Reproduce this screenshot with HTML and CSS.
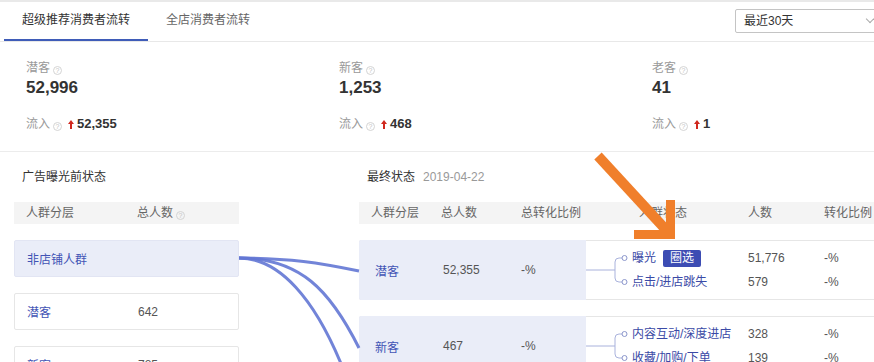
FILE: index.html
```html
<!DOCTYPE html>
<html lang="zh-CN">

<head>
    <meta charset="UTF-8">
    <meta name="viewport" content="width=device-width, initial-scale=1.0">
    <title>消费者流转</title>
    <link rel="stylesheet" href="styles.css">
</head>

<body>
    <div class="page">
        <div class="top-strip"></div>
        <!-- 顶部tab -->
        <div class="tabs">
            <a href="javascript:;" class="tab active">超级推荐消费者流转</a>
            <a href="javascript:;" class="tab">全店消费者流转</a>
            <div class="range">
                <span>最近30天</span>
                <i class="chev"></i>
            </div>
        </div>

        <!-- 汇总数据 -->
        <div class="stats">
            <div class="stat">
                <div class="stat-label">潜客<span class="q">?</span></div>
                <div class="stat-value">52,996</div>
                <div class="stat-flow">流入<span class="q">?</span><svg class="up" width="6" height="9" viewBox="0 0 6 9"><path d="M3 0 L6 4 H4 V9 H2 V4 H0 Z" /></svg><b>52,355</b></div>
            </div>
            <div class="stat">
                <div class="stat-label">新客<span class="q">?</span></div>
                <div class="stat-value">1,253</div>
                <div class="stat-flow">流入<span class="q">?</span><svg class="up" width="6" height="9" viewBox="0 0 6 9"><path d="M3 0 L6 4 H4 V9 H2 V4 H0 Z" /></svg><b>468</b></div>
            </div>
            <div class="stat">
                <div class="stat-label">老客<span class="q">?</span></div>
                <div class="stat-value">41</div>
                <div class="stat-flow">流入<span class="q">?</span><svg class="up" width="6" height="9" viewBox="0 0 6 9"><path d="M3 0 L6 4 H4 V9 H2 V4 H0 Z" /></svg><b>1</b></div>
            </div>
        </div>

        <!-- 流转图 -->
        <div class="flow">
            <div class="before">
                <div class="col-title">广告曝光前状态</div>
                <div class="thead-l">
                    <span class="c1">人群分层</span>
                    <span>总人数<span class="q">?</span></span>
                </div>
                <div class="box-l on">
                    <span class="c1 name">非店铺人群</span>
                    <span></span>
                </div>
                <div class="box-l">
                    <span class="c1 name">潜客</span>
                    <span>642</span>
                </div>
                <div class="box-l">
                    <span class="c1 name">新客</span>
                    <span>785</span>
                </div>
            </div>

            <div class="after">
                <div class="col-title">最终状态<span class="date">2019-04-22</span></div>
                <div class="thead-r">
                    <span>人群分层</span>
                    <span>总人数</span>
                    <span>总转化比例</span>
                    <span>人群状态</span>
                    <span>人数</span>
                    <span>转化比例</span>
                </div>

                <div class="box-r">
                    <div class="box-main">
                        <span class="name">潜客</span>
                        <span>52,355</span>
                        <span>-%</span>
                    </div>
                    <svg class="link" width="46" height="60">
                        <path d="M0 30 H29 M29 30 V22 Q29 18 33 18 H36 M29 30 V38 Q29 42 33 42 H36" />
                        <circle cx="38.5" cy="18" r="2.5" />
                        <circle cx="38.5" cy="42" r="2.5" />
                    </svg>
                    <div class="subs">
                        <div class="sub">
                            <span class="st">曝光<em class="tag">圈选</em></span>
                            <span>51,776</span>
                            <span>-%</span>
                        </div>
                        <div class="sub">
                            <span class="st">点击/进店跳失</span>
                            <span>579</span>
                            <span>-%</span>
                        </div>
                    </div>
                </div>

                <div class="box-r">
                    <div class="box-main">
                        <span class="name">新客</span>
                        <span>467</span>
                        <span>-%</span>
                    </div>
                    <svg class="link" width="46" height="60">
                        <path d="M0 30 H29 M29 30 V22 Q29 18 33 18 H36 M29 30 V38 Q29 42 33 42 H36" />
                        <circle cx="38.5" cy="18" r="2.5" />
                        <circle cx="38.5" cy="42" r="2.5" />
                    </svg>
                    <div class="subs">
                        <div class="sub">
                            <span class="st">内容互动/深度进店</span>
                            <span>328</span>
                            <span>-%</span>
                        </div>
                        <div class="sub">
                            <span class="st">收藏/加购/下单</span>
                            <span>139</span>
                            <span>-%</span>
                        </div>
                    </div>
                </div>
            </div>
        </div>

        <!-- 连线 + 标注箭头 -->
        <svg class="overlay" width="874" height="362" viewBox="0 0 874 362">
            <g class="curves">
                <path d="M239 258 C290 258 320 263 359 271" />
                <path d="M239 258 C300 258 330 290 359 348" />
                <path d="M239 258 C280 258 315 300 342 366" />
            </g>
            <g class="mark">
                <line x1="598" y1="156" x2="668" y2="232" />
                <polyline points="634,234.5 670.5,234.5 670.5,200" />
            </g>
        </svg>
    </div>
</body>

</html>
```

FILE: styles.css
```css
* {
    margin: 0;
    padding: 0;
    box-sizing: border-box;
}

body {
    width: 874px;
    height: 362px;
    overflow: hidden;
    background: #fff;
    font-family: "Liberation Sans", "Noto Sans CJK SC", sans-serif;
    font-size: 12px;
    color: #333;
}

a {
    text-decoration: none;
}

.page {
    position: relative;
    width: 874px;
    height: 362px;
    overflow: hidden;
}

.top-strip {
    height: 2px;
    background: #e9e9e9;
}

/* tabs */
.tabs {
    display: flex;
    height: 40px;
    padding-left: 4px;
    border-bottom: 1px solid #e8e8e8;
}

.tab {
    height: 39px;
    padding: 0 18px;
    line-height: 37px;
    color: #666;
    border-bottom: 2px solid transparent;
}

.tab.active {
    color: #333;
    border-bottom-color: #3f5cb8;
}

.range {
    position: relative;
    margin: 7px -16px 0 auto;
    width: 155px;
    height: 24px;
    padding-left: 8px;
    line-height: 22px;
    border: 1px solid #c4c4c4;
    border-radius: 2px;
    color: #333;
}

.chev {
    position: absolute;
    top: 6px;
    right: 16px;
    width: 6px;
    height: 6px;
    border-right: 1px solid #aaa;
    border-bottom: 1px solid #aaa;
    transform: rotate(45deg);
}

/* stats */
.stats {
    display: flex;
    padding: 18px 0 18px 26px;
    border-bottom: 1px solid #ececec;
}

.stat {
    flex: none;
    width: 313px;
}

.stat-label {
    height: 16px;
    line-height: 16px;
    color: #999;
}

.stat-value {
    height: 24px;
    line-height: 24px;
    font-size: 17px;
    font-weight: bold;
    color: #333;
}

.stat-flow {
    margin-top: 15px;
    height: 18px;
    line-height: 18px;
    color: #999;
}

.stat-flow b {
    font-size: 13px;
    color: #333;
}

.up {
    margin: 0 3px 0 6px;
    vertical-align: -1px;
    fill: #d0281e;
}

.q {
    display: inline-block;
    width: 9px;
    height: 9px;
    margin-left: 3px;
    border: 1px solid #d4d4d4;
    border-radius: 50%;
    font-size: 7px;
    line-height: 8px;
    text-align: center;
    color: #c4c4c4;
    vertical-align: -1px;
}

/* flow */
.flow {
    display: flex;
    gap: 120px;
    padding: 16px 0 0 14px;
}

.before {
    width: 225px;
    flex: none;
}

.after {
    flex: none;
    width: 540px;
}

.col-title {
    height: 18px;
    line-height: 18px;
    padding-left: 8px;
    color: #333;
    margin-bottom: 16px;
}

.date {
    margin-left: 8px;
    color: #999;
}

.thead-l,
.thead-r {
    display: flex;
    height: 22px;
    line-height: 22px;
    background: #f4f4f4;
    color: #666;
    margin-bottom: 16px;
}

.thead-l {
    padding-left: 12px;
}

.thead-l .c1 {
    width: 111px;
}

.box-l {
    position: relative;
    z-index: 1;
    display: flex;
    align-items: center;
    height: 37px;
    padding-left: 12px;
    margin-bottom: 16px;
    background: #fff;
    border: 1px solid #e6e6e6;
    border-radius: 2px;
    color: #555;
}

.box-l.on {
    background: #eaedf8;
    border-color: #e2e5f3;
}

.box-l .c1 {
    width: 111px;
}

.name {
    color: #4254b5;
}

.thead-r {
    padding-left: 12px;
}

.thead-r span:nth-child(1) {
    width: 70px;
}

.thead-r span:nth-child(2) {
    width: 80px;
}

.thead-r span:nth-child(3) {
    width: 118px;
}

.thead-r span:nth-child(4) {
    width: 109px;
}

.thead-r span:nth-child(5) {
    width: 76px;
}

.box-r {
    position: relative;
    z-index: 1;
    display: flex;
    height: 60px;
    margin-bottom: 16px;
    background: #fff;
    border: 1px solid #e6e6e6;
    border-radius: 2px;
    color: #555;
}

.box-main {
    display: flex;
    align-items: center;
    width: 227px;
    margin: -1px 0 -1px -1px;
    padding-left: 16px;
    background: #eaedf8;
    border-radius: 2px 0 0 2px;
}

.box-main span:nth-child(1) {
    width: 68px;
}

.box-main span:nth-child(2) {
    width: 78px;
}

.link {
    flex: none;
    margin-top: -1px;
}

.link path {
    fill: none;
    stroke: #a9b2dc;
    stroke-width: 1;
}

.link circle {
    fill: #fff;
    stroke: #8b96cc;
    stroke-width: 1;
}

.subs {
    padding-top: 5px;
}

.sub {
    display: flex;
    height: 24px;
    line-height: 24px;
}

.sub .st {
    width: 116px;
    color: #3a4aa6;
}

.sub span:nth-child(2) {
    width: 76px;
}

.tag {
    display: inline-block;
    margin-left: 7px;
    padding: 0 7px;
    height: 17px;
    line-height: 17px;
    font-style: normal;
    color: #fff;
    background: #3c4cb3;
    border-radius: 2px;
}

/* overlay */
.overlay {
    position: absolute;
    top: 0;
    left: 0;
    z-index: 2;
    pointer-events: none;
}

.curves path {
    fill: none;
    stroke: #6377d4;
    stroke-width: 3;
    opacity: .9;
}

.mark line,
.mark polyline {
    fill: none;
    stroke: #f07f2b;
    stroke-linejoin: miter;
}

.mark line {
    stroke-width: 10;
}

.mark polyline {
    stroke-width: 9;
}
```
